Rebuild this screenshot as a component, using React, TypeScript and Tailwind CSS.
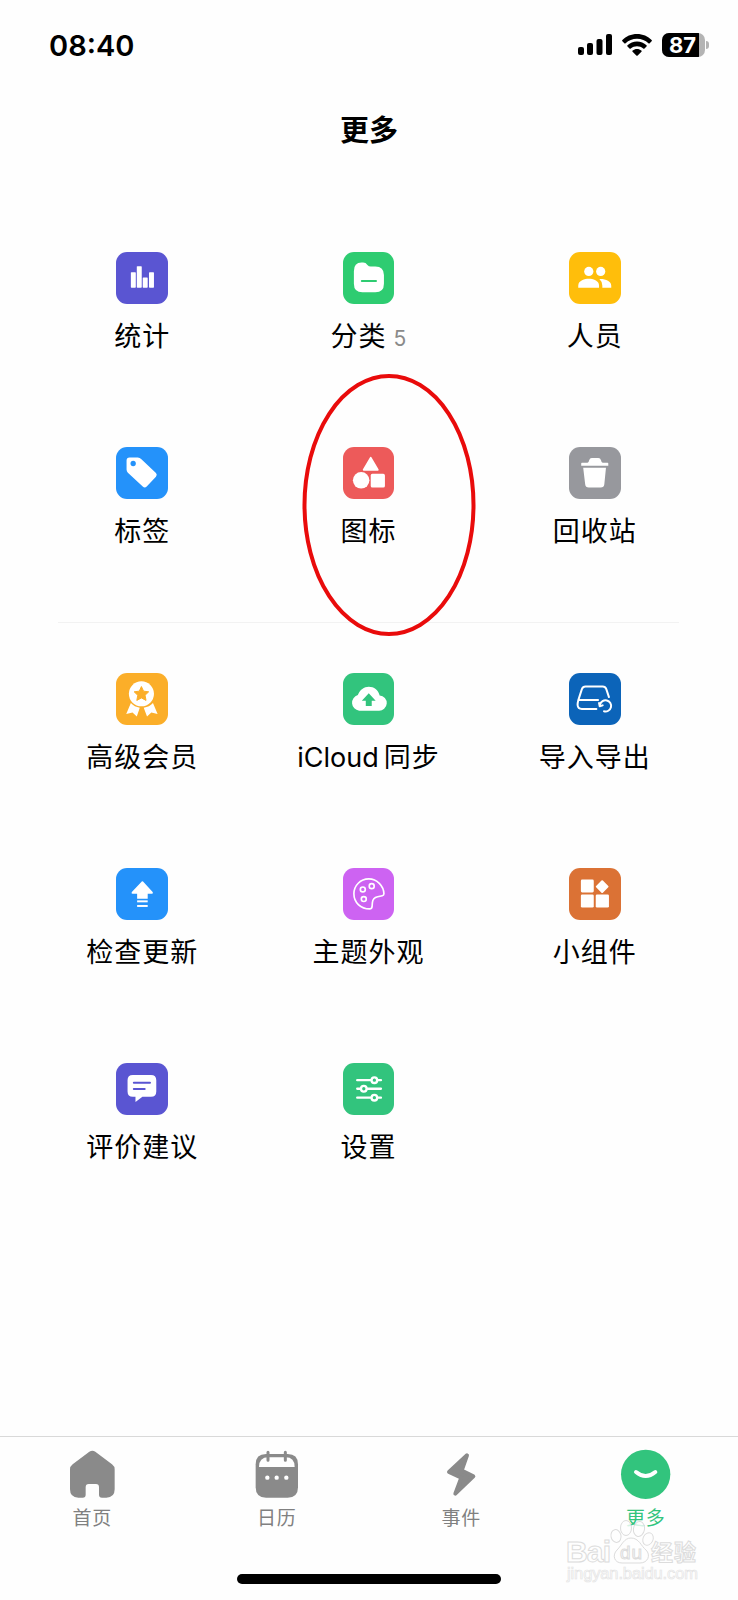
import React from 'react';

type Item = {
  label: string;
  latin?: string;
  count?: number;
  color: string;
  icon: React.ReactNode;
};

const topItems: Item[] = [
  {
    label: '统计',
    color: 'bg-[#5a55d2]',
    icon: (
      <g fill="#fff">
        <rect x="45" y="61" width="15" height="47" rx="2" />
        <rect x="63" y="43" width="15" height="65" rx="2" />
        <rect x="81" y="77" width="15" height="31" rx="2" />
        <rect x="100" y="61" width="15" height="47" rx="2" />
      </g>
    ),
  },
  {
    label: '分类',
    count: 5,
    color: 'bg-[#2ecc71]',
    icon: (
      <>
        <path fill="#fff" d="M33 58Q33 32 56 32H61Q69 32 74 39Q78 44 84 44H98Q124 44 124 70V96Q124 122 98 122H59Q33 122 33 96Z" />
        <path stroke="#2ecc71" strokeWidth="6" strokeLinecap="round" d="M57 88H100" />
      </>
    ),
  },
  {
    label: '人员',
    color: 'bg-[#ffbe0b]',
    icon: (
      <g fill="#fff">
        <circle cx="60" cy="59" r="14" />
        <circle cx="96" cy="59" r="14" />
        <path d="M28 108V102C28 86 48 81 60 81S91 86 91 102V108Z" />
        <path d="M92 82C110 81 128 88 128 102V108H101V102Q101 90 92 82Z" />
      </g>
    ),
  },
  {
    label: '标签',
    color: 'bg-[#2492fa]',
    icon: (
      <>
        <path fill="#fff" d="M41 32H66Q72 32 77 37L121 79Q126 84 121 90L93 120Q87 126 81 120L36 78Q32 74 32 68V41Q32 32 41 32Z" />
        <circle cx="52" cy="50" r="8" fill="#2492fa" />
      </>
    ),
  },
  {
    label: '图标',
    color: 'bg-[#ed5a5a]',
    icon: (
      <g fill="#fff">
        <path stroke="#fff" strokeWidth="6" strokeLinejoin="round" d="M84 33L105 69H63Z" />
        <circle cx="55" cy="101" r="25" />
        <rect x="84" y="81" width="43" height="42" rx="5" />
      </g>
    ),
  },
  {
    label: '回收站',
    color: 'bg-[#97989d]',
    icon: (
      <g fill="#fff">
        <path d="M37 50Q37 48 39 48H56Q60 47 61 40Q63 33 69 33H89Q95 33 97 40Q98 47 102 48H117Q119 48 119 50V57H37Z" />
        <path d="M43 63H112L107 113Q106 123 96 123H60Q50 123 49 113Z" />
      </g>
    ),
  },
];

const bottomItems: Item[] = [
  {
    label: '高级会员',
    color: 'bg-[#fbae29]',
    icon: (
      <>
        <circle cx="77" cy="63" r="38" fill="#fff" />
        <path fill="#fbae29" stroke="#fbae29" strokeWidth="3" strokeLinejoin="round" d="M77 41L83.500 55L99 57L88 67.500L91 83L77 75.500L63 83L66 67.500L55 57L70.500 55Z" />
        <path fill="#fff" d="M45 91Q56 103 72 105L63 132L50 120L31 124Z" />
        <path fill="#fff" d="M112 91Q101 103 84 105L94 132L107 120L126 124Z" />
      </>
    ),
  },
  {
    latin: 'iCloud',
    label: '同步',
    color: 'bg-[#32c47d]',
    icon: (
      <>
        <path fill="#fff" d="M49 114A24 24 0 0 1 45 67C51 51 64 42 78 42C94 42 107 52 111 68A23 23 0 0 1 108 114Z" />
        <path fill="#32c47d" d="M78 61L99 84H87V100H69V84H57Z" />
      </>
    ),
  },
  {
    label: '导入导出',
    color: 'bg-[#0c64b9]',
    icon: (
      <g fill="none" stroke="#fff" strokeWidth="6" strokeLinecap="round" strokeLinejoin="round">
        <path d="M121 73L113 49Q110 41 102 41H50Q42 41 39 49L28 83Q26 90 26 97Q27 109 39 109H83" />
        <path d="M30 82H88" />
        <path d="M94 96A17 17 0 1 1 106 116" />
        <path d="M91 91L93 101L102 98" />
      </g>
    ),
  },
  {
    label: '检查更新',
    color: 'bg-[#2492fa]',
    icon: (
      <g fill="#fff">
        <path d="M76 43Q80 38 84 43L111 73Q114 78 109 78H96V93H64V78H50Q45 78 48 73Z" />
        <rect x="64" y="98" width="32" height="6" />
        <rect x="64" y="112" width="32" height="6" />
      </g>
    ),
  },
  {
    label: '主题外观',
    color: 'bg-[#cd63f2]',
    icon: (
      <g fill="none" stroke="#fff" strokeWidth="5">
        <path strokeLinejoin="round" d="M78 33C103 33 123 54 124 78Q124 83 119 84L105 87Q90 90 89 105L88 118Q87 124 81 124C53 124 33 104 33 78C33 53 53 33 78 33Z" />
        <circle cx="60" cy="65" r="7.500" />
        <circle cx="87" cy="55" r="7.500" />
        <circle cx="63" cy="94" r="7.500" />
      </g>
    ),
  },
  {
    label: '小组件',
    color: 'bg-[#db7235]',
    icon: (
      <g fill="#fff">
        <rect x="36" y="35" width="39" height="39" rx="4" />
        <rect x="36" y="80" width="39" height="40" rx="4" />
        <rect x="81" y="80" width="40" height="40" rx="4" />
        <rect x="86" y="42" width="29" height="29" rx="3" transform="rotate(45 100.500 56.500)" />
      </g>
    ),
  },
  {
    label: '评价建议',
    color: 'bg-[#5a55d2]',
    icon: (
      <>
        <path fill="#fff" d="M51 36H106Q122 36 122 52V86Q122 102 106 102H80L59 118V102H51Q35 102 35 86V52Q35 36 51 36Z" />
        <path stroke="#5a55d2" strokeWidth="6" strokeLinecap="round" d="M54 60H103M54 79H87" />
      </>
    ),
  },
  {
    label: '设置',
    color: 'bg-[#32c47d]',
    icon: (
      <g fill="#32c47d" stroke="#fff" strokeWidth="7" strokeLinecap="round">
        <path d="M43 52H115M43 78H115M43 105H115" />
        <circle cx="95" cy="52" r="8.500" />
        <circle cx="63" cy="78" r="8.500" />
        <circle cx="95" cy="105" r="8.500" />
      </g>
    ),
  },
];

const tabs = [
  {
    label: '首页',
    active: false,
    icon: (
      <path fill="#8a8a8a" d="M67 5Q76 -1 85 5L135 43Q143 49 143 58V118Q143 143 118 143H105Q96 143 96 134V112Q96 102 87 102H65Q56 102 56 112V134Q56 143 47 143H34Q9 143 9 118V58Q9 49 17 43Z" />
    ),
  },
  {
    label: '日历',
    active: false,
    icon: (
      <g transform="translate(2 0)">
        <path fill="#8a8a8a" d="M44 12H108Q139 12 139 43V112Q139 143 108 143H43Q12 143 12 112V43Q12 12 43 12Z" />
        <path fill="#fff" d="M22 51Q22 22 50 22H102Q129 22 129 51Z" />
        <path stroke="#8a8a8a" strokeWidth="9" strokeLinecap="round" d="M49 7V31M101 7V31" />
        <g fill="#fff">
          <circle cx="47" cy="83" r="6.500" />
          <circle cx="75" cy="83" r="6.500" />
          <circle cx="104" cy="83" r="6.500" />
        </g>
      </g>
    ),
  },
  {
    label: '事件',
    active: false,
    icon: (
      <path fill="#8a8a8a" stroke="#8a8a8a" strokeWidth="12" strokeLinejoin="round" d="M93 16L39 66L76 83L58 131L112 79L77 62Z" />
    ),
  },
  {
    label: '更多',
    active: true,
    icon: (
      <>
        <circle cx="77" cy="73" r="74" fill="#32c47d" />
        <path fill="none" stroke="#fff" strokeWidth="12" strokeLinecap="round" d="M48 66Q77 90 106 66" />
      </>
    ),
  },
];

function StatusBar() {
  return (
    <div className="flex h-[90px] items-center justify-between pl-[49px] pr-[29px]">
      <span className="font-[Inter] text-[29px] font-semibold leading-none">08:40</span>
      <div className="flex items-center gap-[10px]">
        <svg width="34" height="22" viewBox="0 0 34 22">
          <rect x="0" y="13" width="6" height="8" rx="2" />
          <rect x="9" y="9" width="6" height="12" rx="2" />
          <rect x="18.500" y="5" width="6" height="16" rx="2" />
          <rect x="28" y="0" width="6" height="21" rx="2" />
        </svg>
        <svg width="30" height="22" viewBox="0 0 30 22">
          <path d="M15 0C20.800 0 26 2.200 29.600 6Q30.200 6.700 29.600 7.300L27.700 9.200Q27.100 9.800 26.400 9.200C23.400 6.400 19.500 4.700 15 4.700S6.600 6.400 3.600 9.200Q2.900 9.800 2.300 9.200L0.400 7.300Q-0.200 6.700 0.400 6C4 2.200 9.200 0 15 0Z" />
          <path d="M15 7.500C18.700 7.500 22 8.900 24.500 11.200Q25.100 11.800 24.500 12.500L22.500 14.400Q21.900 15 21.200 14.400C19.500 13 17.400 12.200 15 12.200S10.500 13 8.800 14.400Q8.100 15 7.500 14.400L5.500 12.500Q4.900 11.800 5.500 11.200C8 8.900 11.300 7.500 15 7.500Z" />
          <path d="M15 15C16.700 15 18.200 15.600 19.300 16.500Q20 17.100 19.400 17.800L15.700 21.500Q15 22.100 14.300 21.500L10.600 17.800Q10 17.100 10.700 16.500C11.800 15.600 13.300 15 15 15Z" />
        </svg>
        <div className="flex items-center gap-px">
          <div className="flex h-6 w-[43px] overflow-hidden rounded-[7px] bg-[#b4b4b4]">
            <div className="flex w-[37px] items-center justify-center bg-black pl-1 font-[Inter] text-[22px] font-bold leading-none text-white">87</div>
          </div>
          <div className="h-2 w-[3px] rounded-r-full bg-[#b4b4b4]" />
        </div>
      </div>
    </div>
  );
}

function Tile({ item }: { item: Item }) {
  return (
    <button className="flex h-[195px] flex-col items-center">
      <span className={`block size-[51.5px] rounded-[11px] ${item.color}`}>
        <svg className="size-[51.5px]" viewBox="0 0 156 156" fill="none">
          {item.icon}
        </svg>
      </span>
      <span className="mt-[11.5px] whitespace-nowrap text-[27px] leading-[40px] tracking-[1px]">
        {item.latin && <span className="mr-[5px] font-[Inter] tracking-normal">{item.latin}</span>}
        {item.label}
        {item.count !== undefined && (
          <span className="ml-[7px] font-[Inter] text-[21px] tracking-normal text-[#8a8a8a]">{item.count}</span>
        )}
      </span>
    </button>
  );
}

function Watermark() {
  return (
    <svg className="absolute left-[555px] top-[1500px]" width="150" height="95" viewBox="0 0 150 95" fill="#fefefe" stroke="#dcdcdc" strokeWidth="1">
      <g fillOpacity="0.8">
        <ellipse cx="61" cy="36" rx="5" ry="6.500" transform="rotate(-12 61 36)" />
        <ellipse cx="71" cy="28" rx="5.500" ry="7.500" />
        <ellipse cx="84" cy="29" rx="5.500" ry="7.500" transform="rotate(10 84 29)" />
        <ellipse cx="93" cy="39" rx="5" ry="6.500" transform="rotate(25 93 39)" />
        <path d="M76 38C84 38 86 46 91 50C96 55 93 63 85 63C79 63 73 63 67 63C59 63 57 55 62 50C67 45 69 38 76 38Z" />
      </g>
      <text x="11" y="62" fontSize="30" fontWeight="700" fontFamily="Liberation Sans, sans-serif" textLength="45">Bai</text>
      <text x="65" y="59" fontSize="19" fontFamily="Liberation Sans, sans-serif" textLength="22">du</text>
      <text x="96" y="60" fontSize="22" fontWeight="700" fontFamily="Noto Sans CJK SC, sans-serif" textLength="45">经验</text>
      <text x="12" y="79" fontSize="16.500" stroke="#e4e4e4" strokeWidth="0.7" fontFamily="Liberation Sans, sans-serif" textLength="131">jingyan.baidu.com</text>
    </svg>
  );
}

export default function App() {
  return (
    <div className="relative flex h-[1600px] w-[738px] flex-col overflow-hidden bg-[#fefefe] font-['Noto_Sans_CJK_SC',sans-serif] text-black">
      <StatusBar />
      <h1 className="mt-[18px] text-center text-[29px] font-bold leading-[40px]">更多</h1>

      <main className="flex-1 pl-[29px] pr-[30px] pt-[104px]">
        <div className="grid grid-cols-3">
          {topItems.map((item) => (
            <Tile key={item.label} item={item} />
          ))}
        </div>
        <hr className="-mt-[20px] mb-[50px] ml-[29px] mr-[29px] border-[#f2f2f2]" />
        <div className="grid grid-cols-3">
          {bottomItems.map((item) => (
            <Tile key={item.label} item={item} />
          ))}
        </div>
      </main>

      <nav className="h-[164px] border-t border-[#d9d9d9]">
        <div className="grid grid-cols-4 pt-[13px]">
          {tabs.map((tab) => (
            <button key={tab.label} className="flex flex-col items-center">
              <svg className="h-[50px] w-[51px] overflow-visible" viewBox="0 0 153 150" fill="none">
                {tab.icon}
              </svg>
              <span className={`mt-[3px] text-[19px] leading-7 tracking-[0.8px] ${tab.active ? 'text-[#32c47d]' : 'text-[#808080]'}`}>
                {tab.label}
              </span>
            </button>
          ))}
        </div>
        <div className="mx-auto mt-[43px] h-[10px] w-[264px] rounded-full bg-black" />
      </nav>

      {/* hand-drawn highlight around the icon entry */}
      <svg className="pointer-events-none absolute left-[300px] top-[372px]" width="178" height="266" fill="none">
        <ellipse cx="89" cy="133" rx="84.500" ry="129" stroke="#e90b0b" strokeWidth="4" />
      </svg>
      <Watermark />
    </div>
  );
}
